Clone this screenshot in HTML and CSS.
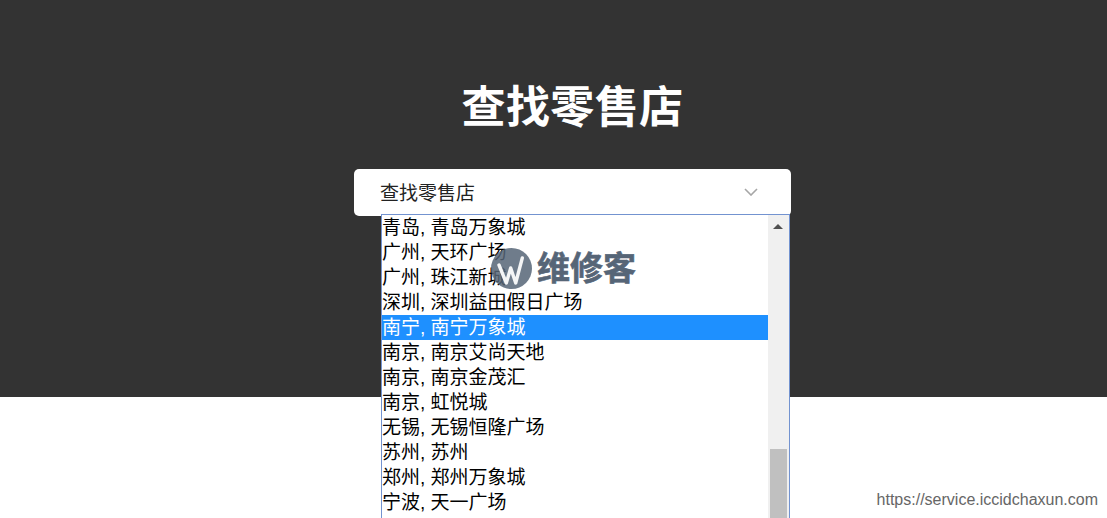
FILE: index.html
```html
<!DOCTYPE html>
<html lang="zh-CN">
  <head>
    <meta charset="UTF-8" />
    <meta name="viewport" content="width=device-width, initial-scale=1.0" />
    <title>查找零售店</title>
    <link rel="stylesheet" href="styles.css">
  </head>
  <body>
    <section class="hero">
      <h1 class="hero-title">查找零售店</h1>
      <div class="store-select">
        <span class="store-select-label">查找零售店</span>
        <svg class="store-select-arrow" width="14" height="8" viewBox="0 0 14 8">
          <path d="M1 1l6 6 6-6" fill="none" stroke="#a6a6a6" stroke-width="1.6" />
        </svg>
      </div>
    </section>

    <div class="store-dropdown">
      <ul class="store-list">
        <li>青岛, 青岛万象城</li>
        <li>广州, 天环广场</li>
        <li>广州, 珠江新城</li>
        <li>深圳, 深圳益田假日广场</li>
        <li class="active">南宁, 南宁万象城</li>
        <li>南京, 南京艾尚天地</li>
        <li>南京, 南京金茂汇</li>
        <li>南京, 虹悦城</li>
        <li>无锡, 无锡恒隆广场</li>
        <li>苏州, 苏州</li>
        <li>郑州, 郑州万象城</li>
        <li>宁波, 天一广场</li>
      </ul>
      <div class="scrollbar">
        <span class="scrollbar-up"></span>
        <span class="scrollbar-thumb"></span>
      </div>
    </div>

    <div class="watermark">
      <svg class="watermark-logo" width="41" height="41" viewBox="0 0 41 41">
        <circle cx="20.5" cy="20.5" r="20.5" fill="#566577" fill-opacity="0.85" />
        <path d="M8 17l7.3 18 4.4-15 5 15 6.6-25" fill="none" stroke="#f4f5f6" stroke-width="3.4" stroke-linejoin="round" stroke-linecap="round" />
      </svg>
      <span class="watermark-text">维修客</span>
    </div>

    <div class="site-url">https://service.iccidchaxun.com</div>
  </body>
</html>
```

FILE: styles.css
```css
html,
body {
  height: 100%;
}

body {
  margin: 0;
  overflow: hidden;
  background-color: #fff;
  font-family: "Liberation Sans", "Noto Sans CJK SC", sans-serif;
}

.hero {
  display: flex;
  flex-direction: column;
  align-items: center;
  box-sizing: border-box;
  height: 397px;
  padding-left: 38px;
  background-color: #333;
}

.hero-title {
  margin: 81px 0 0;
  font-size: 44px;
  line-height: 54px;
  font-weight: bold;
  letter-spacing: 0.4px;
  color: #fff;
}

.store-select {
  display: flex;
  align-items: center;
  justify-content: space-between;
  box-sizing: border-box;
  width: 437px;
  height: 47px;
  margin: 34px 0 0;
  padding: 0 33px 2px 26px;
  background-color: #fff;
  border-radius: 5px;
}

.store-select-label {
  font-size: 19px;
  color: #222;
}

.store-dropdown {
  position: absolute;
  top: 214px;
  left: 381px;
  display: flex;
  box-sizing: border-box;
  width: 409px;
  height: 304px;
  background-color: #fff;
  border: 1px solid #7393d0;
  border-bottom: none;
  overflow: hidden;
}

.store-list {
  flex: 1;
  margin: 0;
  padding: 0;
  list-style: none;
  font-size: 19px;
  color: #000;
}

.store-list li {
  height: 25px;
  line-height: 26px;
  white-space: nowrap;
}

.store-list li.active {
  background-color: #1e90ff;
  color: #fff;
}

.scrollbar {
  position: relative;
  width: 21px;
  background-color: #f0f0f0;
}

.scrollbar-up {
  position: absolute;
  top: 9px;
  left: 5px;
  border-left: 5px solid transparent;
  border-right: 5px solid transparent;
  border-bottom: 5px solid #505050;
}

.scrollbar-thumb {
  position: absolute;
  top: 234px;
  left: 2px;
  bottom: 0;
  width: 17px;
  background-color: #c0c0c0;
}

.watermark {
  position: absolute;
  top: 248px;
  left: 491px;
  display: flex;
  align-items: center;
  gap: 5px;
}

.watermark-logo {
  display: block;
}

.watermark-text {
  font-size: 33px;
  line-height: 41px;
  font-weight: bold;
  color: #566577;
  -webkit-text-stroke: 0.6px #566577;
}

.site-url {
  position: absolute;
  right: 9px;
  bottom: 9px;
  font-size: 16px;
  color: #666;
}
```
